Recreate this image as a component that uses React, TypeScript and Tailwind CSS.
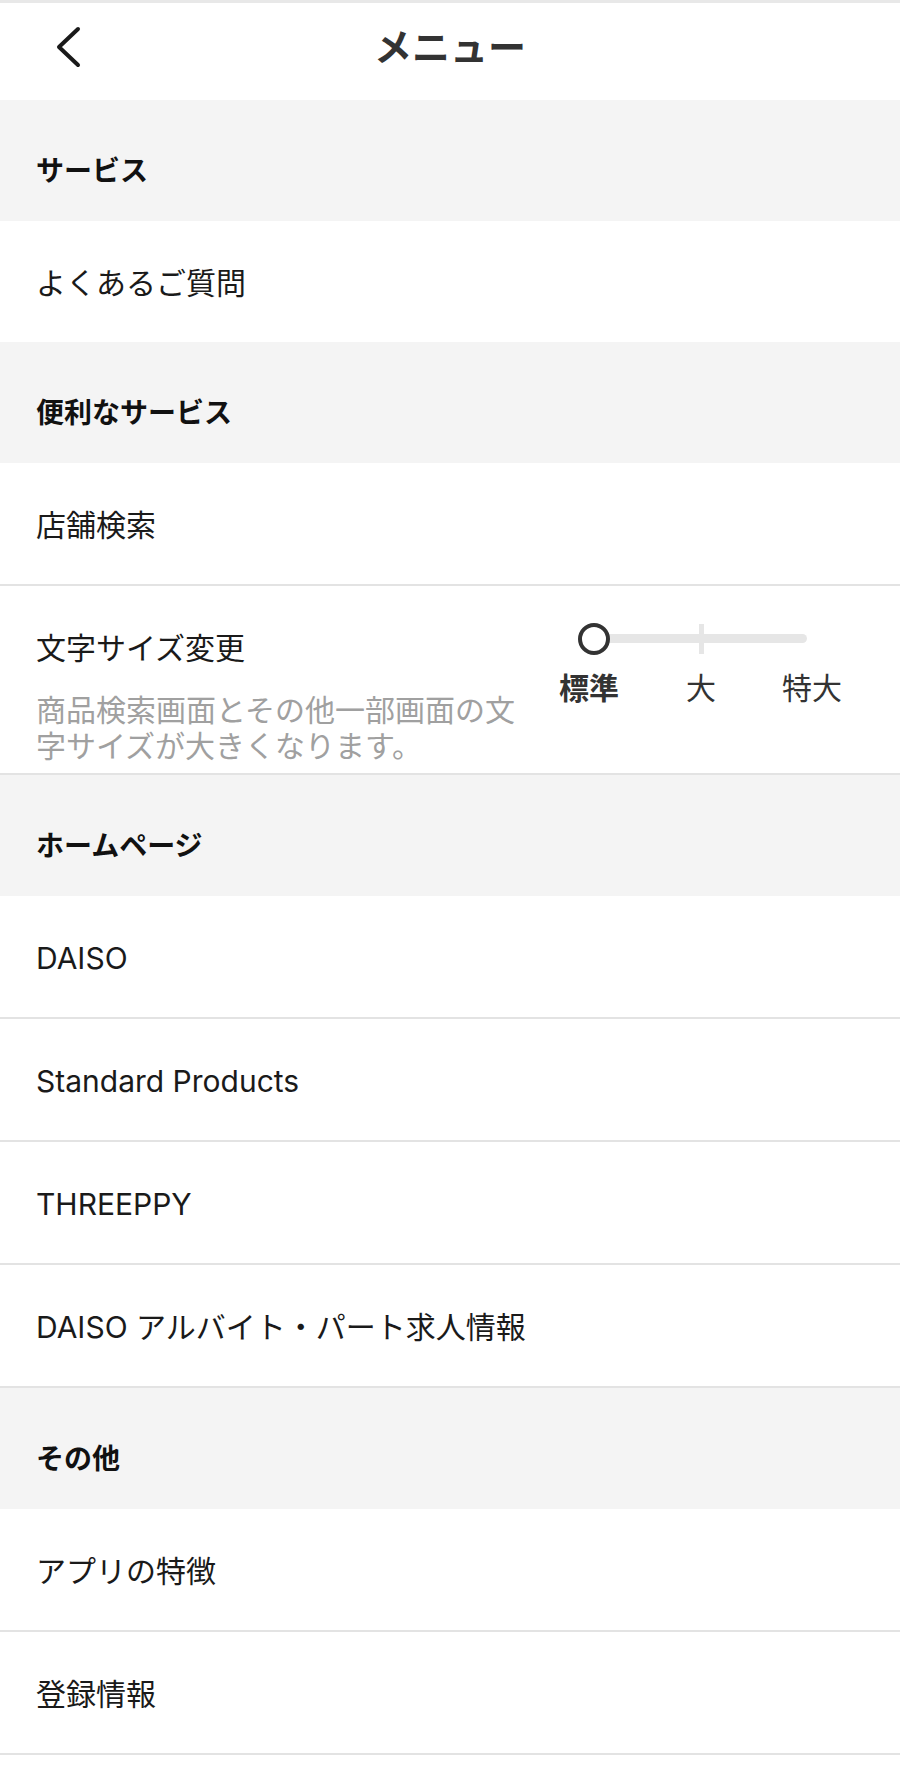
import React, { useState } from 'react';

const font = { fontFamily: 'Inter, "Noto Sans CJK JP", "Noto Sans", sans-serif' };

const SectionHeader: React.FC<{ title: string }> = ({ title }) => (
  <div className="h-[121px] bg-[#f4f4f4] flex items-center pl-9 pt-5">
    <span className="text-[28px] font-bold text-[#111]">{title}</span>
  </div>
);

const MenuItem: React.FC<{ label: string; border?: boolean }> = ({ label, border = true }) => (
  <div
    className={`flex items-center pl-9 pt-[4px] bg-white ${
      border ? 'h-[123px] border-b-2 border-[#e3e3e3]' : 'h-[121px]'
    }`}
  >
    <span className="text-[30px] text-[#1a1a1a]">{label}</span>
  </div>
);

const sizes = ['標準', '大', '特大'];

const FontSizeRow: React.FC = () => {
  const [level, setLevel] = useState(0);
  const stops = [54, 161, 267];

  return (
    <div className="h-[189px] border-b-2 border-[#e3e3e3] flex bg-white">
      <div className="w-[540px] pl-9 pt-[42px]">
        <div className="text-[30px] leading-[40px] text-[#1a1a1a]">文字サイズ変更</div>
        <p className="mt-[24px] w-[490px] text-[30px] leading-[36px] text-[#a0a0a0]">
          商品検索画面とその他一部画面の文字サイズが大きくなります。
        </p>
      </div>
      <div className="relative w-[320px] h-full">
        {/* track */}
        <div className="absolute left-[54px] top-[48px] w-[213px] h-[9px] rounded-full bg-[#e6e6e6]" />
        {/* middle tick */}
        <div className="absolute left-[159px] top-[38px] w-[5px] h-[30px] bg-[#e6e6e6]" />
        {/* thumb */}
        <div
          className="absolute top-[37px] w-[32px] h-[32px] rounded-full border-[4px] border-[#333] bg-white"
          style={{ left: stops[level] - 16 }}
        />
        {sizes.map((s, i) => (
          <button
            key={s}
            onClick={() => setLevel(i)}
            className={`absolute top-[82px] h-[40px] w-[80px] -ml-[40px] text-center text-[30px] leading-[40px] text-[#333] ${
              i === level ? 'font-bold' : 'font-normal'
            }`}
            style={{ left: i === 0 ? 49 : i === 1 ? 161 : 272 }}
          >
            {s}
          </button>
        ))}
      </div>
    </div>
  );
};

const App: React.FC = () => {
  return (
    <div className="w-[900px] min-h-[1770px] bg-white" style={font}>
      {/* header */}
      <div className="h-[100px] border-t-[3px] border-[#e8e8e8] flex items-center relative">
        <button className="absolute left-[50px] top-[20px] w-[36px] h-[48px] flex items-center justify-center">
          <svg width="30" height="44" viewBox="0 0 30 44" fill="none">
            <polyline
              points="25,4 6,22 25,40"
              stroke="#1a1a1a"
              strokeWidth="4"
              strokeLinecap="round"
              strokeLinejoin="round"
            />
          </svg>
        </button>
        <h1 className="flex-1 text-center text-[38px] font-bold text-[#333] -mt-[8px]">メニュー</h1>
      </div>

      <SectionHeader title="サービス" />
      <MenuItem label="よくあるご質問" border={false} />

      <SectionHeader title="便利なサービス" />
      <MenuItem label="店舗検索" />
      <FontSizeRow />

      <SectionHeader title="ホームページ" />
      <MenuItem label="DAISO" />
      <MenuItem label="Standard Products" />
      <MenuItem label="THREEPPY" />
      <MenuItem label="DAISO アルバイト・パート求人情報" />

      <SectionHeader title="その他" />
      <MenuItem label="アプリの特徴" />
      <MenuItem label="登録情報" />
    </div>
  );
};

export default App;
